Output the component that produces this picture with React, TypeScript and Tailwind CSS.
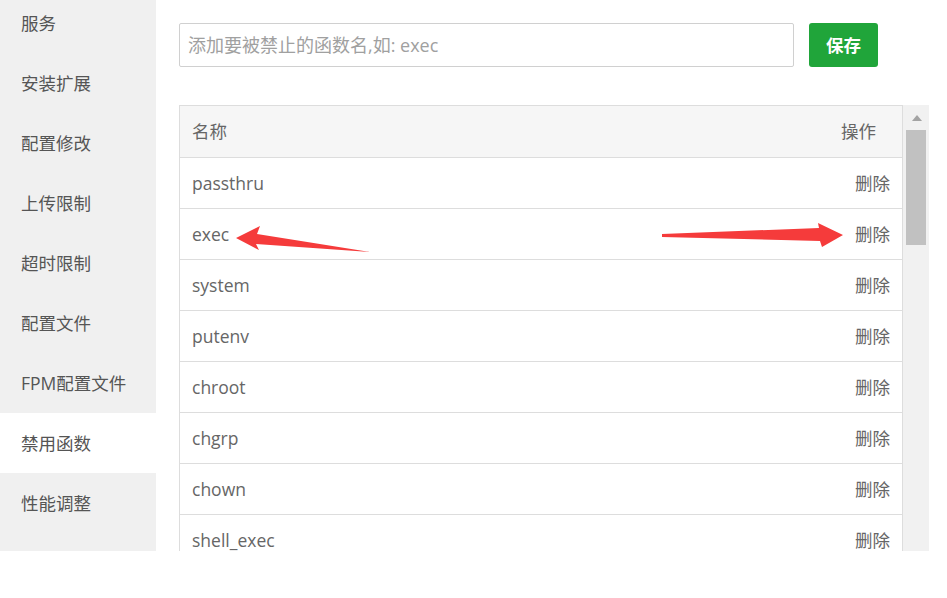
const menu = [
  '服务',
  '安装扩展',
  '配置修改',
  '上传限制',
  '超时限制',
  '配置文件',
  'FPM配置文件',
  '禁用函数',
  '性能调整',
];

const funcs = ['passthru', 'exec', 'system', 'putenv', 'chroot', 'chgrp', 'chown', 'shell_exec'];

const font = { fontFamily: '"Open Sans", "Noto Sans CJK SC", sans-serif' };

const Arrows = () => (
  <svg
    className="absolute inset-0 pointer-events-none"
    width={947}
    height={598}
    viewBox="0 0 947 598"
  >
    {/* left arrow pointing at exec */}
    <polygon
      points="236,238 260,226 257,234 370,252 256,244 259,250"
      fill="#f53b3b"
    />
    {/* right arrow pointing at 删除 */}
    <polygon
      points="662,234 819,228 818,223 843,235 822,247 820,241 662,237"
      fill="#f53b3b"
    />
  </svg>
);

export default function App() {
  return (
    <div className="relative w-[947px] h-[598px] bg-white" style={font}>
      <div className="flex h-[551px]">
        {/* Sidebar */}
        <aside className="w-[156px] shrink-0 bg-[#f0f0f0] overflow-hidden">
          <div className="-mt-[7px]">
            {menu.map((m) => (
              <div
                key={m}
                className={`h-[60px] flex items-center pl-[21px] text-[17.5px] text-[#555] ${
                  m === '禁用函数' ? 'bg-white' : ''
                }`}
              >
                {m}
              </div>
            ))}
          </div>
        </aside>

        {/* Content */}
        <main className="flex-1 pl-[23px] pt-[23px] overflow-hidden">
          <div className="flex items-center">
            <input
              className="w-[615px] h-[44px] border border-[#d0d0d0] rounded-[2px] px-[8px] text-[18px] text-[#555] placeholder:text-[#a0a0a0] outline-none"
              placeholder="添加要被禁止的函数名,如: exec"
            />
            <button className="ml-[15px] w-[69px] h-[44px] rounded-[3px] bg-[#20a53a] text-white text-[17.5px] font-bold">
              保存
            </button>
          </div>

          <div className="mt-[38px] flex h-[446px] overflow-hidden">
            <div className="w-[724px] border border-[#ddd] border-b-0">
              <div className="h-[52px] flex items-center justify-between bg-[#f6f6f6] border-b border-[#ddd] pl-[12px] pr-[26px] text-[17.5px] text-[#666]">
                <span>名称</span>
                <span>操作</span>
              </div>
              {funcs.map((f) => (
                <div
                  key={f}
                  className="h-[51px] flex items-center justify-between border-b border-[#ddd] pl-[12px] pr-[12px] text-[17.5px] text-[#666]"
                >
                  <span>{f}</span>
                  <span>删除</span>
                </div>
              ))}
            </div>
            {/* scrollbar */}
            <div className="w-[26px] bg-[#f1f1f1] relative">
              <div className="absolute left-[9px] top-[10px] w-0 h-0 border-l-[5px] border-r-[5px] border-b-[6px] border-l-transparent border-r-transparent border-b-[#a3a3a3]" />
              <div className="absolute left-[3px] top-[25px] w-[20px] h-[115px] bg-[#c1c1c1]" />
            </div>
          </div>
        </main>
      </div>
      <Arrows />
    </div>
  );
}
